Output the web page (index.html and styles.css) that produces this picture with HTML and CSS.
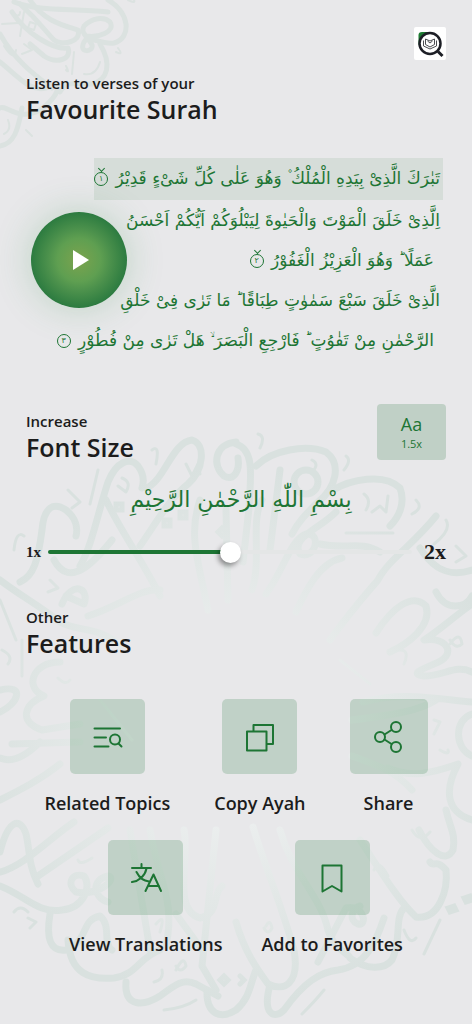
FILE: index.html
```html
<!DOCTYPE html>
<html lang="en">
<head>
<title>Favourite Surah</title>
<meta charset="UTF-8">
<meta name="viewport" content="width=device-width,initial-scale=1.0">
<link rel="stylesheet" href="styles.css">
</head>
<body>
<svg class="pattern" viewBox="0 0 472 1024" preserveAspectRatio="xMidYMin slice" aria-hidden="true">
	<defs>
		<radialGradient id="ink" gradientUnits="userSpaceOnUse" cx="236" cy="735" r="300">
			<stop offset="0.3" stop-color="#ebeeee"/>
			<stop offset="0.55" stop-color="#e3e8e7"/>
			<stop offset="0.9" stop-color="#d9e1df"/>
		</radialGradient>
	</defs>
	<!-- corner medallion -->
	<g fill="none" stroke="#dbe2e0" stroke-linecap="round" stroke-linejoin="round">
		<g stroke-width="5">
			<path d="M14 2C40 12 70 8 108 12"/>
			<path d="M108 0C130 12 132 38 114 43C100 45 88 34 84 42C78 54 94 52 92 45C88 36 80 34 84 26C92 18 104 16 110 22C116 32 98 38 86 36"/>
			<path d="M30 0C44 22 66 26 78 30C82 42 62 46 54 40C46 32 40 22 20 4"/>
			<path d="M12 12C26 34 54 50 68 48C72 60 56 64 44 56L30 44"/>
			<path d="M0 34C14 60 36 76 52 88"/>
			<path d="M0 62C20 78 30 92 46 88C64 78 60 96 40 110C18 122 6 104 0 108"/>
			<path d="M100 44C112 64 108 80 92 84C76 84 66 80 60 92"/>
			<path d="M0 146C14 144 18 130 22 108"/>
		</g>
		<g stroke-width="2">
			<path d="M24 12L20 36M74 52L72 74M2 24L18 23M30 22L36 24L34 30L28 28ZM12 14Q20 18 20 12M66 70Q70 74 66 66M84 74Q96 76 100 62M116 52Q124 56 118 48M4 134Q12 130 8 120M26 130L32 136M128 0Q136 4 134 0M4 46Q14 62 16 50M24 44L32 50L22 54"/>
		</g>
	</g>
	<!-- large medallion -->
	<g fill="none" stroke="url(#ink)" stroke-linecap="round" stroke-linejoin="round">
		<g stroke-width="7">
			<path d="M20 582C34 576 38 560 42 530C44 506 54 502 66 510C76 518 78 528 76 536"/>
			<path d="M80 566C92 546 98 512 108 482C116 462 130 456 138 466C144 474 144 482 142 488"/>
			<path d="M54 560C70 590 96 560 112 540"/>
			<path d="M106 500C120 530 142 560 160 596"/>
			<path d="M146 488C164 482 172 442 192 440C206 444 204 470 188 484C170 498 158 520 140 546"/>
			<path d="M236 444C256 450 250 480 249 508L243 562"/>
			<path d="M236 442C214 444 212 466 224 476C234 482 240 470 238 458"/>
			<path d="M256 466C272 450 306 444 326 452C342 464 336 488 318 502C306 514 298 522 292 534"/>
			<path d="M280 470L270 550M262 500C250 520 262 560 252 590"/>
			<circle cx="306" cy="482" r="12"/>
			<path d="M333 490C350 480 384 472 400 488C406 504 398 518 390 526"/>
			<path d="M336 512C318 530 290 538 300 554C316 560 322 532 306 534C290 540 284 570 266 594"/>
			<path d="M200 500C188 534 198 560 208 610M226 510L228 600"/>
			<path d="M342 558C320 562 306 590 296 612M436 516C412 546 388 560 378 580C366 594 350 612 330 640"/>
			<path d="M420 548C436 574 454 576 472 570M320 544C346 550 360 540 380 552"/>
			<path d="M376 633C392 608 412 592 426 606C432 626 408 644 390 652"/>
			<path d="M472 604C452 618 440 630 424 640C448 636 458 656 434 664C420 670 410 674 424 676C444 676 456 664 472 672"/>
			<path d="M436 592C446 612 466 608 472 596"/>
			<path d="M363 702C400 692 430 698 472 702M352 720C400 714 420 710 436 700"/>
			<path d="M472 714C454 720 454 748 472 756M388 768C410 778 430 774 458 764C444 790 446 812 472 820M352 756C380 766 396 772 412 790"/>
			<path d="M0 580C18 594 40 606 60 622C78 632 100 626 120 646"/>
			<path d="M62 604C72 580 90 588 84 604L66 596M88 616C120 606 140 588 160 590"/>
			<path d="M0 690C26 684 18 704 0 712M60 662C32 662 24 688 44 696C24 704 18 722 42 730L80 724"/>
			<path d="M0 758C14 764 30 752 40 742M12 744L80 742M0 800C20 790 40 780 60 764"/>
			<path d="M0 852C8 820 20 816 26 834C30 850 28 864 38 884M0 872C24 866 50 838 74 822M38 876L108 828"/>
			<path d="M0 886C26 896 38 914 62 910C84 908 92 886 84 876C72 872 66 884 76 892C100 896 118 878 108 876C90 880 94 898 108 902"/>
			<path d="M50 914C46 938 50 952 66 950C90 940 80 920 100 916C112 926 102 944 112 950"/>
			<path d="M68 940C70 974 90 980 114 978C138 974 138 958 160 950"/>
			<path d="M126 982C124 1008 144 1006 160 996C176 984 184 978 196 984L218 996"/>
			<path d="M207 990C206 1014 220 1020 236 1010C250 998 250 984 256 970"/>
			<path d="M130 830L150 950M150 830C158 880 176 900 166 946M184 830C190 860 172 910 200 918C220 914 212 894 222 886"/>
			<path d="M216 830L202 966L216 990M202 950L176 914"/>
			<path d="M253 827C266 870 280 900 294 950C300 984 284 992 268 984C256 968 244 950 236 922"/>
			<path d="M270 985C262 1014 274 1020 284 1010C304 982 320 972 338 970C366 966 376 942 384 918"/>
			<path d="M280 830C292 874 320 894 328 930C334 950 350 954 350 958C366 970 384 970 392 960C402 940 394 918 404 908"/>
			<path d="M318 962L346 908C364 904 368 926 358 924C348 920 352 908 360 906"/>
			<path d="M360 840C380 870 398 900 416 917C440 920 448 888 446 870C436 858 434 868 430 862"/>
			<path d="M419 830C430 852 446 864 453 850C456 834 450 828 446 810"/>
		</g>
		<g stroke-width="3">
			<path d="M14 550Q16 530 24 536M98 470L90 504M68 490L80 502L72 508M122 478Q132 482 126 492L118 486M152 450Q160 444 156 464M186 464L192 476L198 464L200 474M258 434Q266 436 260 448M312 460Q320 464 312 472M346 456Q352 460 344 470M364 494Q372 500 366 510M372 512L380 506L386 512L388 496M346 533L393 533M416 500Q424 508 412 514M446 520Q452 530 434 544M456 546L466 556L456 562M50 580L58 588L48 592M0 600L16 640M2 650Q14 656 8 664M22 640L22 676M58 678Q66 686 70 680M404 664Q410 650 400 650M450 644Q460 630 462 644Q456 650 450 640M434 720L440 722L434 734M440 750Q450 756 448 750M78 860Q80 866 92 858M14 912Q20 904 28 912M28 918L36 922L30 928M156 924Q166 912 160 932M176 970Q184 954 186 966Q180 974 176 966M154 982Q164 980 162 970M164 1010Q184 1008 196 1000M302 1014Q316 1000 324 990M374 870Q378 858 388 876M412 830Q420 844 430 832M440 920L424 954M404 930Q410 946 416 938M266 926Q270 918 272 928Q268 936 264 928M100 700L132 740M340 660L370 684"/>
		</g>
		<g stroke-width="5" stroke-linejoin="miter">
			<path d="M116 504h6v6h-6zM164 520h6v6h-6zM180 512h6v6h-6zM222 528l4 4l-4 4l-4 -4zM448 908l6 -2l2 4l-6 2zM464 898l6 -2l2 4l-6 2zM224 976l4 4l-4 4l-4 -4zM240 976l4 4l-4 4"/>
		</g>
	</g>
</svg>

<div class="screen">
	<header>
		<a class="logo" href="#" aria-label="Quran search">
			<svg viewBox="0 0 32 33" width="32" height="33">
				<path d="M4.500 18V8Q4.500 5 8 5H17L16 16Z" fill="#1d7a32"/>
				<circle cx="16" cy="16.500" r="10.500" fill="#fff" stroke="#1d1f26" stroke-width="2.500"/>
				<path d="M24 24.500L28.500 29" stroke="#1d1f26" stroke-width="3"/>
				<path d="M11.500 12L16 14L20.500 12V17.500L16 20L11.500 17.500ZM13.500 14L16 16L18.500 14M9.500 13.500V19L16 22L22.500 19V13.500" fill="none" stroke="#4b4d52"/>
			</svg>
		</a>
	</header>

	<section>
		<p class="kicker">Listen to verses of your</p>
		<h2>Favourite Surah</h2>
		<div class="surah">
			<div class="verses" lang="ar" dir="rtl">
				<p class="current">تَبٰرَكَ الَّذِىْ بِيَدِهِ الْمُلْكُ ۫ وَهُوَ عَلٰى كُلِّ شَىْءٍ قَدِيْرُ <span class="mark pause">١</span></p>
				<p>اِلَّذِىْ خَلَقَ الْمَوْتَ وَالْحَيٰوةَ لِيَبْلُوَكُمْ اَيُّكُمْ اَحْسَنُ</p>
				<p class="end">عَمَلًا ؕ وَهُوَ الْعَزِيْزُ الْغَفُوْرُ <span class="mark pause">٢</span></p>
				<p>الَّذِىْ خَلَقَ سَبْعَ سَمٰوٰتٍ طِبَاقًا ؕ مَا تَرٰى فِىْ خَلْقِ</p>
				<p class="end">الرَّحْمٰنِ مِنْ تَفٰوُتٍ ؕ فَارْجِعِ الْبَصَرَ ۙ هَلْ تَرٰى مِنْ فُطُوْرٍ <span class="mark">٣</span></p>
			</div>
			<button class="play" aria-label="Play"><svg viewBox="0 0 16 20" width="16" height="20"><path d="M0 0L16 10L0 20Z" fill="#fff"/></svg></button>
		</div>
	</section>

	<section class="size">
		<div class="size-head">
			<div class="size-title">
				<p class="kicker">Increase</p>
				<h2>Font Size</h2>
			</div>
			<button class="scale"><b>Aa</b>1.5x</button>
		</div>
		<p class="sample" lang="ar" dir="rtl">بِسْمِ اللّٰهِ الرَّحْمٰنِ الرَّحِيْمِ</p>
		<div class="range">
			<label for="size">1x</label>
			<input type="range" id="size" min="1" max="2" step="0.1" value="1.5">
			<span class="max">2x</span>
		</div>
	</section>

	<section>
		<p class="kicker">Other</p>
		<h2>Features</h2>
		<div class="features">
			<button class="feature">
				<span class="tile"><svg viewBox="0 0 32 32" width="32" height="32"><path d="M3.500 7.500H29M3.500 16.500H15M3.500 25.500H17.500M27.500 22.500L30.500 25.500"/><circle cx="24" cy="18.500" r="5"/></svg></span>
				Related Topics
			</button>
			<button class="feature">
				<span class="tile"><svg viewBox="0 0 32 32" width="32" height="32"><path d="M3 10.500H22.500V29.500H3ZM9.500 10.500V4H29V23H22.500"/></svg></span>
				Copy Ayah
			</button>
			<button class="feature">
				<span class="tile wide"><svg viewBox="0 0 32 32" width="32" height="32"><circle cx="7" cy="16" r="5"/><circle cx="23" cy="6" r="5"/><circle cx="23" cy="26" r="5"/><path d="M11.500 13.500L18.500 9M11.500 18.500L18.500 23"/></svg></span>
				Share
			</button>
		</div>
		<div class="features second">
			<button class="feature">
				<span class="tile"><svg viewBox="0 0 32 32" width="32" height="32"><path d="M2 6H21M11.500 2V6M16.500 6.500C15 14 9 19 2 20M6.500 10C9 15 14 19 19 19.500M15.500 29L23.500 12.500L31 29M18.500 24H29"/></svg></span>
				View Translations
			</button>
			<button class="feature">
				<span class="tile"><svg viewBox="0 0 32 32" width="32" height="32"><path d="M6.500 3.500H25.500V29.500L16 24L6.500 29.500Z"/></svg></span>
				Add to Favorites
			</button>
		</div>
	</section>
</div>
</body>
</html>
```
FILE: styles.css
```css
*{
	box-sizing:border-box;
	margin:0;
	padding:0;
}

body{
	position:relative;
	min-height:100vh;
	overflow-x:hidden;
	background:#e8e8ea;
	color:#1c1c1c;
	font-family:"Open Sans","Noto Sans",sans-serif;
}

/* calligraphy behind everything */
.pattern{
	position:absolute;
	top:0;
	left:0;
	width:100%;
	height:100%;
}

.screen{
	position:relative;
	padding:27px 26px 40px;
}

header{
	display:flex;
	justify-content:flex-end;
}
.logo{
	display:block;
	height:33px;
	background:#fff;
	border-radius:2px;
}

button{
	border:none;
	background:none;
	color:inherit;
	font-family:inherit;
	cursor:pointer;
}

.kicker{
	font-size:15px;
	line-height:18px;
	font-weight:600;
}
h2{
	font-size:25px;
	line-height:34px;
	font-weight:600;
}
header + section{margin-top:14px}

/* surah */
.surah{
	display:grid;
	align-items:center;
	margin-top:32px;
}
.surah > *{grid-area:1 / 1}
.verses{
	padding-right:3px;
	color:#1d7534;
	font-family:"DejaVu Sans",sans-serif;
	font-size:17px;
	line-height:40px;
	white-space:nowrap;
}
.verses p{
	width:fit-content;
	height:40px;
	padding:0 3px;
}
.verses .current{
	height:42px;
	padding-left:0;
	background:#d6ddd9;
}
.verses .end{padding-right:9px}
.mark{
	position:relative;
	display:inline-block;
	width:14px;
	height:14px;
	margin-right:2px;
	border:1px solid;
	border-radius:50%;
	font-size:8px;
	line-height:12px;
	text-align:center;
	vertical-align:middle;
}
.pause::before{
	content:"";
	position:absolute;
	top:-7px;
	left:4px;
	width:4px;
	height:4px;
	border:solid;
	border-width:0 1px 1px 0;
	transform:rotate(45deg);
}
.play{
	display:flex;
	align-items:center;
	justify-content:center;
	justify-self:start;
	width:96px;
	height:96px;
	margin:2px 0 0 5px;
	padding-left:4px;
	border-radius:50%;
	background:radial-gradient(circle closest-side,#7ba34e,#5f9f51 45%,#4c914c 65%,#2c7b40);
	box-shadow:0 0 36px rgba(60,150,80,0.25);
}

/* font size */
.size{margin:44px 0}
.size-head{
	display:flex;
	align-items:flex-start;
	justify-content:space-between;
}
.size-title{padding-top:8px}
.scale{
	width:69px;
	height:56px;
	border-radius:4px;
	background:#c0d0c6;
	color:#1d7534;
	font-size:11px;
	line-height:16px;
}
.scale b{
	display:block;
	font-size:18px;
	line-height:24px;
	font-weight:400;
}
.sample{
	margin-top:16px;
	padding-left:10px;
	color:#1d7534;
	font-family:"DejaVu Sans",sans-serif;
	font-size:22px;
	line-height:40px;
	text-align:center;
}
.range{
	display:flex;
	align-items:center;
	margin-top:20px;
	font:bold 15px/24px "Liberation Serif",serif;
}
.range .max{
	margin-left:12px;
	font-size:22px;
}
.range input{
	flex:1;
	min-width:0;
	height:24px;
	margin-left:7px;
	appearance:none;
	background:none;
}
.range input::-webkit-slider-runnable-track{
	height:4px;
	border-radius:2px;
	background:linear-gradient(90deg,#1d7534 50%,#e4e6e6 50%);
}
.range input::-webkit-slider-thumb{
	appearance:none;
	width:21px;
	height:21px;
	margin-top:-8px;
	border-radius:50%;
	background:#fff;
	box-shadow:-2px 3px 5px rgba(0,0,0,0.4);
}

/* features */
.features{
	display:flex;
	justify-content:center;
	gap:44px;
	margin-top:39px;
}
.second{
	gap:39px;
	margin-top:25px;
}
.feature{
	display:flex;
	flex-direction:column;
	align-items:center;
	gap:17px;
	font-size:18px;
	line-height:24px;
	font-weight:600;
	white-space:nowrap;
}
.tile{
	display:flex;
	align-items:center;
	justify-content:center;
	width:75px;
	height:75px;
	border-radius:5px;
	background:rgba(34,120,62,0.2);
}
.wide{width:78px}
.tile svg{
	fill:none;
	stroke:#1d7534;
	stroke-width:2;
	stroke-linecap:round;
	stroke-linejoin:round;
}
```
